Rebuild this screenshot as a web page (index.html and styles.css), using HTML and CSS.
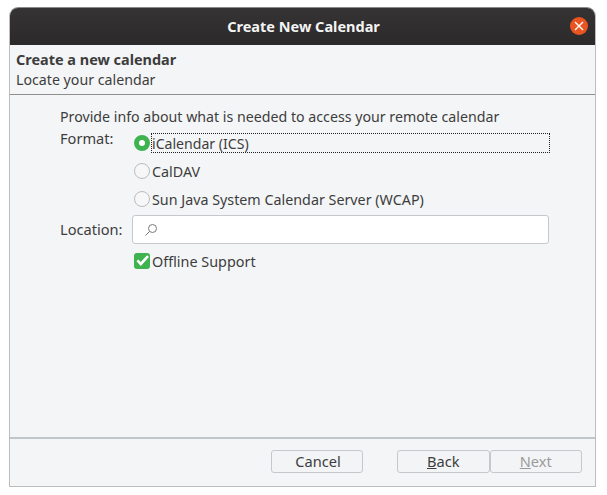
FILE: index.html
```html
<!DOCTYPE html>
<html lang="en">
<head>
  <meta charset="UTF-8">
  <title>Create New Calendar</title>
  <link rel="stylesheet" href="styles.css">
</head>
<body>
  <div class="window">
    <div class="titlebar">
      <span class="title">Create New Calendar</span>
      <span class="close">
        <svg width="10" height="10" viewBox="0 0 10 10"><path d="M1 1L9 9M9 1L1 9" stroke="#fff" stroke-width="1.4"/></svg>
      </span>
    </div>

    <div class="header">
      <div class="header-title">Create a new calendar</div>
      <div class="header-sub">Locate your calendar</div>
    </div>

    <div class="content">
      <div class="intro">Provide info about what is needed to access your remote calendar</div>
      <div class="form">
        <div class="label label-format">Format:</div>
        <div class="options">
          <div class="option">
            <span class="radio radio-on"></span>
            <span class="focused">iCalendar (ICS)</span>
          </div>
          <div class="option">
            <span class="radio"></span>
            <span>CalDAV</span>
          </div>
          <div class="option">
            <span class="radio"></span>
            <span>Sun Java System Calendar Server (WCAP)</span>
          </div>
        </div>

        <div class="label">Location:</div>
        <div class="field">
          <svg width="14" height="14" viewBox="0 0 14 14" fill="none" stroke="#77797c"><circle cx="8.5" cy="5.5" r="4"/><path d="M5.5 8.5L1.5 12.5"/></svg>
        </div>

        <div></div>
        <div class="option option-check">
          <span class="check">
            <svg width="16" height="16" viewBox="0 0 16 16"><path d="M3.4 7.4L6.8 11L14 3.2" fill="none" stroke="#fff" stroke-width="2.6"/></svg>
          </span>
          <span>Offline Support</span>
        </div>
      </div>
    </div>

    <div class="footer">
      <button class="btn btn-cancel">Cancel</button>
      <div class="nav">
        <button class="btn"><u>B</u>ack</button>
        <button class="btn" disabled><u>N</u>ext</button>
      </div>
    </div>
  </div>
</body>
</html>
```

FILE: styles.css
```css
body {
  margin: 0;
  background: #fff;
  font-family: "Noto Sans", "Open Sans", sans-serif;
  font-size: 14.2px;
  color: #3d3d3d;
}

.window {
  box-sizing: border-box;
  width: 587px;
  height: 480px;
  margin: 7px 0 0 9px;
  border: 1px solid #bdbdbd;
  border-top-color: #8a8a8a;
  border-radius: 9px 9px 0 0;
  background: #f4f5f7;
  display: flex;
  flex-direction: column;
}

.titlebar {
  box-sizing: border-box;
  height: 37px;
  flex: none;
  padding: 0 0 2px 2px;
  background: linear-gradient(#353333, #2b2929);
  border-radius: 8px 8px 0 0;
  display: flex;
  align-items: center;
  justify-content: center;
  position: relative;
}

.title {
  color: #f4f4f4;
  font-weight: 700;
  font-size: 14.5px;
}

.close {
  position: absolute;
  right: 7px;
  top: 9px;
  width: 18px;
  height: 18px;
  border-radius: 50%;
  background: #e95420;
  display: flex;
  align-items: center;
  justify-content: center;
}

.header {
  height: 50px;
  flex: none;
  box-sizing: border-box;
  padding: 5px 0 0 6px;
  border-bottom: 1px solid #8f8f8f;
  line-height: 20px;
}

.header-title {
  font-weight: 700;
  font-size: 14.45px;
}

.content {
  flex: 1;
  padding: 12px 0 0 50px;
}

.intro {
  line-height: 20px;
}

.form {
  display: grid;
  grid-template-columns: 72px 417px;
  align-items: center;
  padding-top: 2px;
}

.label {
  line-height: 18px;
  padding-bottom: 2px;
  font-size: 14.6px;
}

.label-format {
  align-self: start;
}

.options {
  display: flex;
  flex-direction: column;
}

.option {
  height: 28px;
  display: flex;
  align-items: center;
  gap: 2px;
  padding-left: 2px;
  font-size: 14.3px;
}

.radio {
  box-sizing: border-box;
  width: 16px;
  height: 16px;
  border: 1px solid #b9bcc1;
  border-radius: 50%;
  background: #f7f7f8;
}

.radio-on {
  border: 5px solid #3eb34f;
  background: #fff;
}

.focused {
  flex: 1;
  margin-top: -1px;
  height: 18px;
  line-height: 20px;
  font-size: 14.1px;
  outline: 1px dotted #222;
}

.field {
  box-sizing: border-box;
  height: 29px;
  margin: 2px 0 2px;
  padding-left: 11px;
  background: #fff;
  border: 1px solid #c6c8cd;
  border-radius: 3px;
  display: flex;
  align-items: center;
}

.option-check {
  height: 30px;
  font-size: 14.4px;
}

.check {
  width: 16px;
  height: 16px;
  border-radius: 3px;
  background: #3eb34f;
}

.footer {
  height: 49px;
  flex: none;
  box-sizing: border-box;
  border-top: 2px solid #c0c5ca;
  padding: 11px 13px 0 261px;
  display: flex;
  justify-content: space-between;
  align-items: flex-start;
}

.nav {
  display: flex;
}

.btn {
  box-sizing: border-box;
  width: 92.5px;
  height: 23px;
  padding: 0 0 1px;
  font: inherit;
  font-size: 14.6px;
  color: #3d3d3d;
  background: #f3f4f6;
  border: 1px solid #c6c8cc;
  border-radius: 3px;
}

.btn-cancel {
  width: 92px;
  padding-left: 2px;
}

.btn:disabled {
  color: #9a9b9d;
}
```
